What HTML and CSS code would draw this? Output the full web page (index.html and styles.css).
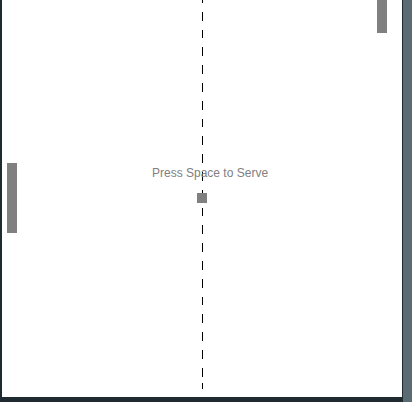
FILE: index.html
```html
<!DOCTYPE html>
<html>
<head>
<meta charset="utf-8">
<link rel="stylesheet" href="styles.css">
</head>
<body>
<div class="frame">
  <div class="court">
    <div class="net"></div>
    <div class="paddle paddle-left"></div>
    <div class="paddle paddle-right"></div>
    <div class="ball"></div>
    <div class="message">Press Space to Serve</div>
  </div>
</div>
</body>
</html>
```
FILE: styles.css
```css
html, body {
  margin: 0;
  padding: 0;
}
body {
  background: #5b6b73;
  width: 412px;
  height: 402px;
  overflow: hidden;
  font-family: "Liberation Sans", Arial, sans-serif;
}
.frame {
  width: 400px;
  height: 397px;
  border-left: 2px solid #1f2b31;
  border-right: 1px solid #1f2b31;
  border-bottom: 5px solid #1f2b31;
  background: #ffffff;
}
.court {
  position: relative;
  width: 400px;
  height: 397px;
  overflow: hidden;
}
.net {
  position: absolute;
  left: 200px;
  top: 0;
  width: 1px;
  height: 389px;
  background: repeating-linear-gradient(to bottom, #000 0, #000 8.9px, transparent 8.9px, transparent 17.8px);
  background-position: 0 -6px;
}
.paddle {
  position: absolute;
  width: 10px;
  height: 70px;
  background: #808080;
}
.paddle-left {
  left: 5px;
  top: 163px;
}
.paddle-right {
  left: 375px;
  top: -37px;
}
.ball {
  position: absolute;
  left: 195px;
  top: 193px;
  width: 10px;
  height: 10px;
  background: #808080;
}
.message {
  position: absolute;
  left: 150px;
  top: 166px;
  font-size: 12px;
  line-height: 14px;
  color: #808080;
  white-space: nowrap;
}
```
